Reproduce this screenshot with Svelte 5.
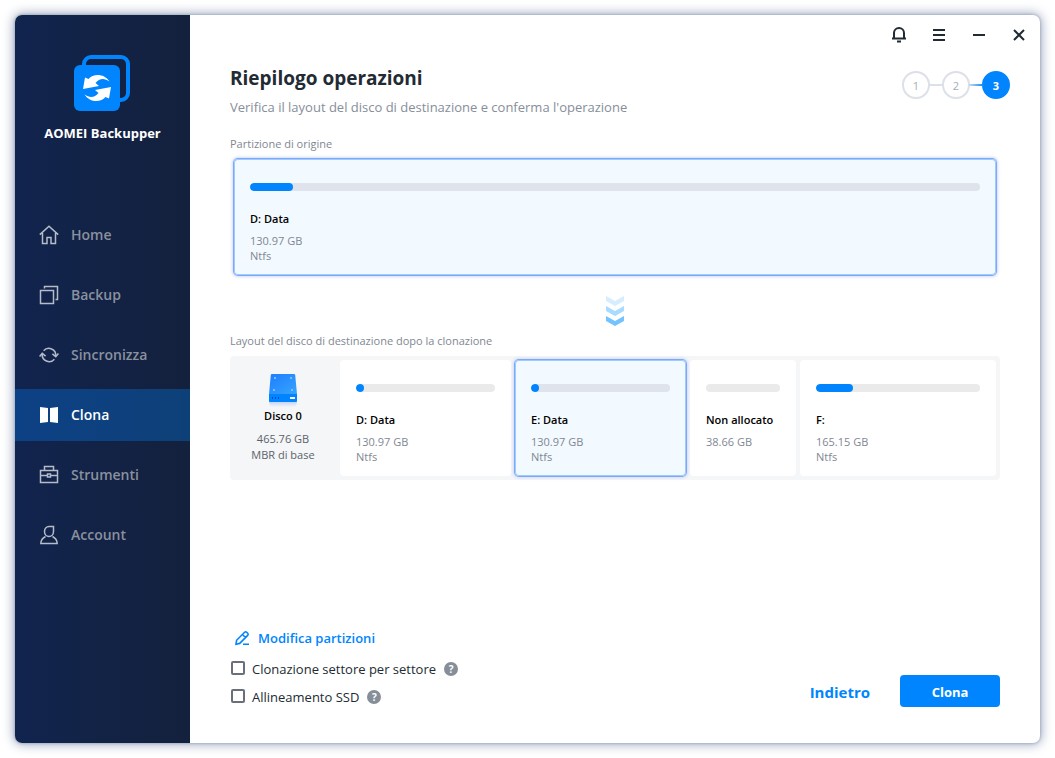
<script>
  const nav = ['Home', 'Backup', 'Sincronizza', 'Clona', 'Strumenti', 'Account'];
  let active = $state('Clona');

  const source = { name: 'D: Data', size: '130.97 GB', fs: 'Ntfs', used: 5.9, selected: true };
  const target = [
    { name: 'D: Data', size: '130.97 GB', fs: 'Ntfs', used: 5.8, share: 171 },
    { name: 'E: Data', size: '130.97 GB', fs: 'Ntfs', used: 5.8, share: 171, selected: true },
    { name: 'Non allocato', size: '38.66 GB', fs: '', used: 0, share: 106 },
    { name: 'F:', size: '165.15 GB', fs: 'Ntfs', used: 22.6, share: 196 }
  ];

  let sectorBySector = $state(false);
  let alignSsd = $state(false);
</script>

{#snippet navIcon(name)}
  <svg class="nav-icon" viewBox="0 0 20 20" width="20" height="20" aria-hidden="true">
    {#if name === 'Home'}
      <path d="M.8 9.600 10 1.200l9.200 8.400M3.500 8v10.500h4.500v-6h4v6h4.500V8" />
    {:else if name === 'Backup'}
      <path d="M1.500 5.500h13v13h-13zM5.500 3.500v-2h13v13h-2" />
    {:else if name === 'Sincronizza'}
      <path d="M4.600 5.800A7 7 0 0 1 16.800 11M15.400 14.200A7 7 0 0 1 3.200 9" />
      <path d="M.6 11.400 3.200 8.400 6.600 11.200M13.400 8.800l3.400 2.800 2.600-3" />
    {:else if name === 'Clona'}
      <path class="solid" d="M1 2l8 1v14l-8 1zM19 2l-8 1v14l8 1z" />
    {:else if name === 'Strumenti'}
      <path d="M1.500 5.500h17v12h-17zM5.500 5.500v-4h9v4M1.500 10.500h7M12 10.500h6.500M8.500 9h3v3h-3z" />
    {:else}
      <path d="M10 1.500h4.500v5a4.500 5 0 0 1-9 0 4.700 5 0 0 1 4.500-5zM6.500 11.500C3.500 13 2 15 1.800 18.500h16.400C18 15 16.500 13 13.500 11.500" />
    {/if}
  </svg>
{/snippet}

{#snippet partition(p)}
  <article class="part" class:selected={p.selected}>
    <div class="bar"><div class="fill" style:width="{p.used}%" class:some={p.used > 0}></div></div>
    <h3>{p.name}</h3>
    <p>{p.size}</p>
    <p>{p.fs}</p>
  </article>
{/snippet}

{#snippet help(label)}
  <button class="help" type="button" aria-label={label}>?</button>
{/snippet}

<div class="window">
  <aside>
    <div class="brand">
      <svg viewBox="0 0 57 56" width="57" height="56" aria-hidden="true">
        <rect x="10" y="2" width="44" height="43" rx="7" fill="none" stroke="#0085ff" stroke-width="4" />
        <rect x="12" y="13" width="32" height="32" fill="#132447" />
        <rect x="0" y="10" width="46" height="46" rx="6" fill="#0085ff" />
        <g fill="#fff">
          <path d="M9 34 11 22.500l3.500 1.500C19 18.500 30 18 35.500 26.500c-5-3.500-10-3.500-14 1.500l3.500 3z" />
          <path d="M9 34 11 22.500l3.500 1.500C19 18.500 30 18 35.500 26.500c-5-3.500-10-3.500-14 1.500l3.500 3z" transform="rotate(180 23 33)" />
        </g>
      </svg>
      <strong>AOMEI Backupper</strong>
    </div>
    <nav>
      {#each nav as item}
        <button type="button" class:active={active === item} onclick={() => (active = item)}>
          {@render navIcon(item)}
          <span>{item}</span>
        </button>
      {/each}
    </nav>
  </aside>

  <main>
    <div class="titlebar">
      <button type="button" aria-label="Notifiche">
        <svg viewBox="0 0 16 16" width="16" height="16"><path d="M3 11V6a5 5 0 0 1 10 0v5M1 11.500h14M6 14.500h4" /></svg>
      </button>
      <button type="button" aria-label="Menu">
        <svg viewBox="0 0 16 16" width="16" height="16"><path d="M2 3h12M2 8h12M2 13h12" /></svg>
      </button>
      <button type="button" aria-label="Riduci a icona">
        <svg viewBox="0 0 16 16" width="16" height="16"><path d="M2 8h12" /></svg>
      </button>
      <button type="button" aria-label="Chiudi">
        <svg viewBox="0 0 16 16" width="16" height="16"><path d="M3 3l10 10M13 3 3 13" /></svg>
      </button>
    </div>

    <header>
      <div>
        <h1>Riepilogo operazioni</h1>
        <p>Verifica il layout del disco di destinazione e conferma l'operazione</p>
      </div>
      <ol class="steps">
        <li>1</li>
        <li>2</li>
        <li class="current" aria-current="step">3</li>
      </ol>
    </header>

    <h2>Partizione di origine</h2>
    <section class="source">{@render partition(source)}</section>

    <svg class="flow" viewBox="0 0 18 30" width="18" height="30" aria-hidden="true">
      <path d="M0 0l9 5 9-5v5l-9 5-9-5z" fill="#d6edff" />
      <path d="M0 10l9 5 9-5v5l-9 5-9-5z" fill="#a8dbff" />
      <path d="M0 20l9 5 9-5v5l-9 5-9-5z" fill="#74c3ff" />
    </svg>

    <h2>Layout del disco di destinazione dopo la clonazione</h2>
    <section class="disk">
      <div class="disk-info">
        <svg viewBox="0 0 32 34" width="32" height="34" aria-hidden="true">
          <defs>
            <linearGradient id="lid" x1="0" y1="0" x2="1" y2="1">
              <stop offset="0" stop-color="#1f7dff" />
              <stop offset="1" stop-color="#35a5ff" />
            </linearGradient>
            <linearGradient id="under" x1="0" y1="0" x2="0" y2="1">
              <stop offset="0" stop-color="#b9cff8" />
              <stop offset="1" stop-color="#f4f6f8" />
            </linearGradient>
          </defs>
          <path d="M2 28h28v2l-2 4H4l-2-4z" fill="url(#under)" />
          <path d="M5 1h22q1 0 1.200 1L30 21H2L3.800 2Q4 1 5 1z" fill="url(#lid)" />
          <path d="M2 21h28v7q0 1-1 1H3q-1 0-1-1z" fill="#0085ff" />
          <path d="M7 4h2v2H7zM23 4h2v2h-2zM6 16h2v2H6zM24 16h2v2h-2z" fill="#7fbcff" />
          <path d="M5 24h1v2H5zM8 24h1v2H8zM11 24h1v2h-1z" fill="#0047d6" />
          <path d="M23 24h5v2h-5z" fill="#fff" />
        </svg>
        <h3>Disco 0</h3>
        <p>465.76 GB</p>
        <p>MBR di base</p>
      </div>
      <div class="parts" style:grid-template-columns={target.map((p) => `minmax(0, ${p.share}fr)`).join(' ')}>
        {#each target as p}
          {@render partition(p)}
        {/each}
      </div>
    </section>

    <footer>
      <div class="options">
        <a href="#modifica">
          <svg viewBox="0 0 16 16" width="16" height="16" aria-hidden="true">
            <path d="M2 14.200 2.600 10.300 10.600 2.300a1.500 1.500 0 0 1 2.100 0l1 1a1.500 1.500 0 0 1 0 2.100L5.700 13.400zM8.500 4.500l3 3M9 14.200h6" />
          </svg>
          Modifica partizioni
        </a>
        <div class="option">
          <label><input type="checkbox" bind:checked={sectorBySector} />Clonazione settore per settore</label>
          {@render help('Informazioni sulla clonazione settore per settore')}
        </div>
        <div class="option">
          <label><input type="checkbox" bind:checked={alignSsd} />Allineamento SSD</label>
          {@render help("Informazioni sull'allineamento SSD")}
        </div>
      </div>
      <div class="actions">
        <button type="button" class="back">Indietro</button>
        <button type="button" class="go">Clona</button>
      </div>
    </footer>
  </main>
</div>

<style>
  :global(body) {
    margin: 0;
    background: #fff;
  }

  * {
    box-sizing: border-box;
  }

  h1, h2, h3, p, ol {
    margin: 0;
    padding: 0;
  }

  button {
    border: 0;
    padding: 0;
    background: none;
    font: inherit;
    color: inherit;
    cursor: pointer;
  }

  svg {
    display: block;
    flex: none;
  }

  .window {
    display: flex;
    min-height: calc(100vh - 30px);
    margin: 15px;
    border-radius: 7px;
    overflow: hidden;
    background: #fff;
    box-shadow: 0 0 3px #8f9bb0, 0 0 12px 1px #98a3bd;
    font-family: "Open Sans", "Noto Sans", sans-serif;
    color: #222b33;
  }

  aside {
    flex: none;
    width: 175px;
    background: linear-gradient(90deg, #11244e, #14213d);
  }

  .brand {
    display: flex;
    flex-direction: column;
    align-items: center;
    gap: 12px;
    padding-top: 40px;
    color: #fff;
  }

  .brand strong {
    font-size: 13px;
    line-height: 20px;
    font-weight: 700;
  }

  nav {
    display: flex;
    flex-direction: column;
    gap: 8px;
    margin-top: 66px;
  }

  nav button {
    display: flex;
    align-items: center;
    gap: 12px;
    height: 52px;
    padding-left: 24px;
    font-size: 14px;
    font-weight: 600;
    color: #8a919e;
  }

  nav span {
    padding-bottom: 2px;
  }

  nav button.active {
    background: linear-gradient(90deg, #0d4185, #0e4078);
    color: #fff;
  }

  .nav-icon {
    fill: none;
    stroke: #b5bbc7;
    stroke-width: 1.5;
  }

  .nav-icon .solid {
    fill: #fff;
    stroke: none;
  }

  main {
    flex: 1;
    min-width: 0;
    display: flex;
    flex-direction: column;
    padding: 0 40px 36px;
  }

  .titlebar {
    display: flex;
    justify-content: flex-end;
    gap: 24px;
    height: 40px;
    margin-right: -27px;
  }

  .titlebar svg {
    fill: none;
    stroke: #222b33;
    stroke-width: 2;
  }

  header {
    display: flex;
    justify-content: space-between;
    margin-right: -10px;
    padding-top: 8px;
  }

  h1 {
    font-size: 19px;
    line-height: 30px;
    font-weight: 700;
  }

  header p {
    font-size: 13px;
    line-height: 20px;
    margin-top: 4px;
    color: #868e99;
  }

  .steps {
    display: flex;
    gap: 12px;
    margin-top: 8px;
    list-style: none;
  }

  .steps li {
    position: relative;
    width: 28px;
    height: 28px;
    border: 2px solid #dce0e7;
    border-radius: 50%;
    font-size: 11px;
    line-height: 25px;
    text-align: center;
    color: #a6acb5;
  }

  .steps li + li::before {
    content: "";
    position: absolute;
    top: 11px;
    right: 100%;
    width: 16px;
    height: 2px;
    background: #dce0e7;
  }

  .steps .current {
    border-color: #0085ff;
    background: #0085ff;
    color: #fff;
    font-weight: 700;
  }

  .steps .current::before {
    background: linear-gradient(90deg, #dce0e7, #0085ff);
  }

  h2 {
    font-size: 11px;
    line-height: 20px;
    font-weight: 400;
    color: #7f8792;
  }

  header + h2 {
    margin-top: 17px;
  }

  .source {
    padding: 5px 4px 4px;
  }

  .part {
    min-width: 0;
    min-height: 116px;
    padding: 24px 16px 10px;
    border-radius: 4px;
    background: #fff;
  }

  .part.selected {
    background: #f2f9ff;
    box-shadow: inset 0 0 0 1px #9accff, 0 0 0 1px #7fa9f6, 0 0 3px 2px #d3d9f5;
  }

  .bar {
    height: 8px;
    border-radius: 4px;
    background: #eaeaea;
    overflow: hidden;
  }

  .selected .bar {
    background: #dfe3ec;
  }

  .fill {
    height: 8px;
    border-radius: 4px;
    background: #0085ff;
  }

  .fill.some {
    min-width: 8px;
  }

  h3 {
    font-size: 11px;
    line-height: 18px;
    font-weight: 600;
    color: #000;
    white-space: nowrap;
  }

  .part h3 {
    margin: 19px 0 5px;
  }

  .part p {
    font-size: 11px;
    line-height: 15px;
    color: #7f8792;
  }

  .flow {
    align-self: center;
    margin: 17px 0 5px;
  }

  .disk {
    display: flex;
    margin-top: 5px;
    padding: 4px 4px 4px 0;
    border-radius: 4px;
    background: #f4f6f8;
  }

  .disk-info {
    flex: none;
    display: flex;
    flex-direction: column;
    align-items: center;
    width: 110px;
    padding-top: 13px;
    padding-right: 4px;
  }

  .disk-info h3 {
    margin-bottom: 6px;
  }

  .disk-info p {
    font-size: 11px;
    line-height: 16px;
    color: #5c626b;
  }

  .parts {
    flex: 1;
    min-width: 0;
    display: grid;
    gap: 4px;
  }

  footer {
    display: flex;
    justify-content: space-between;
    align-items: flex-end;
    margin-top: auto;
    padding-top: 24px;
  }

  .options {
    display: flex;
    flex-direction: column;
    gap: 8px;
  }

  .options a {
    display: flex;
    align-items: center;
    gap: 8px;
    height: 22px;
    margin-bottom: 2px;
    padding-left: 4px;
    font-size: 13px;
    font-weight: 600;
    color: #0085ff;
    text-decoration: none;
  }

  .options a svg {
    fill: none;
    stroke: #0085ff;
    stroke-width: 1.6;
  }

  .option {
    display: flex;
    align-items: center;
    gap: 8px;
    height: 20px;
  }

  .option label {
    display: flex;
    align-items: center;
    gap: 7px;
    padding-left: 1px;
    font-size: 13px;
    line-height: 20px;
  }

  .option input {
    appearance: none;
    flex: none;
    width: 14px;
    height: 14px;
    margin: 0 0 2px;
    border: 2px solid #6a6f79;
    border-radius: 2px;
    background: #fff;
  }

  .option input:checked {
    border-color: #0085ff;
    background: #0085ff;
  }

  .help {
    width: 14px;
    height: 14px;
    border-radius: 50%;
    background: #868e99;
    color: #fff;
    font-size: 10px;
    line-height: 14px;
    font-weight: 700;
  }

  .actions {
    display: flex;
    gap: 30px;
  }

  .back,
  .go {
    height: 32px;
    padding-top: 2px;
    font-weight: 700;
  }

  .back {
    font-size: 15px;
    color: #0085ff;
  }

  .go {
    width: 100px;
    border-radius: 4px;
    background: #0085ff;
    color: #fff;
    font-size: 13px;
  }
</style>
